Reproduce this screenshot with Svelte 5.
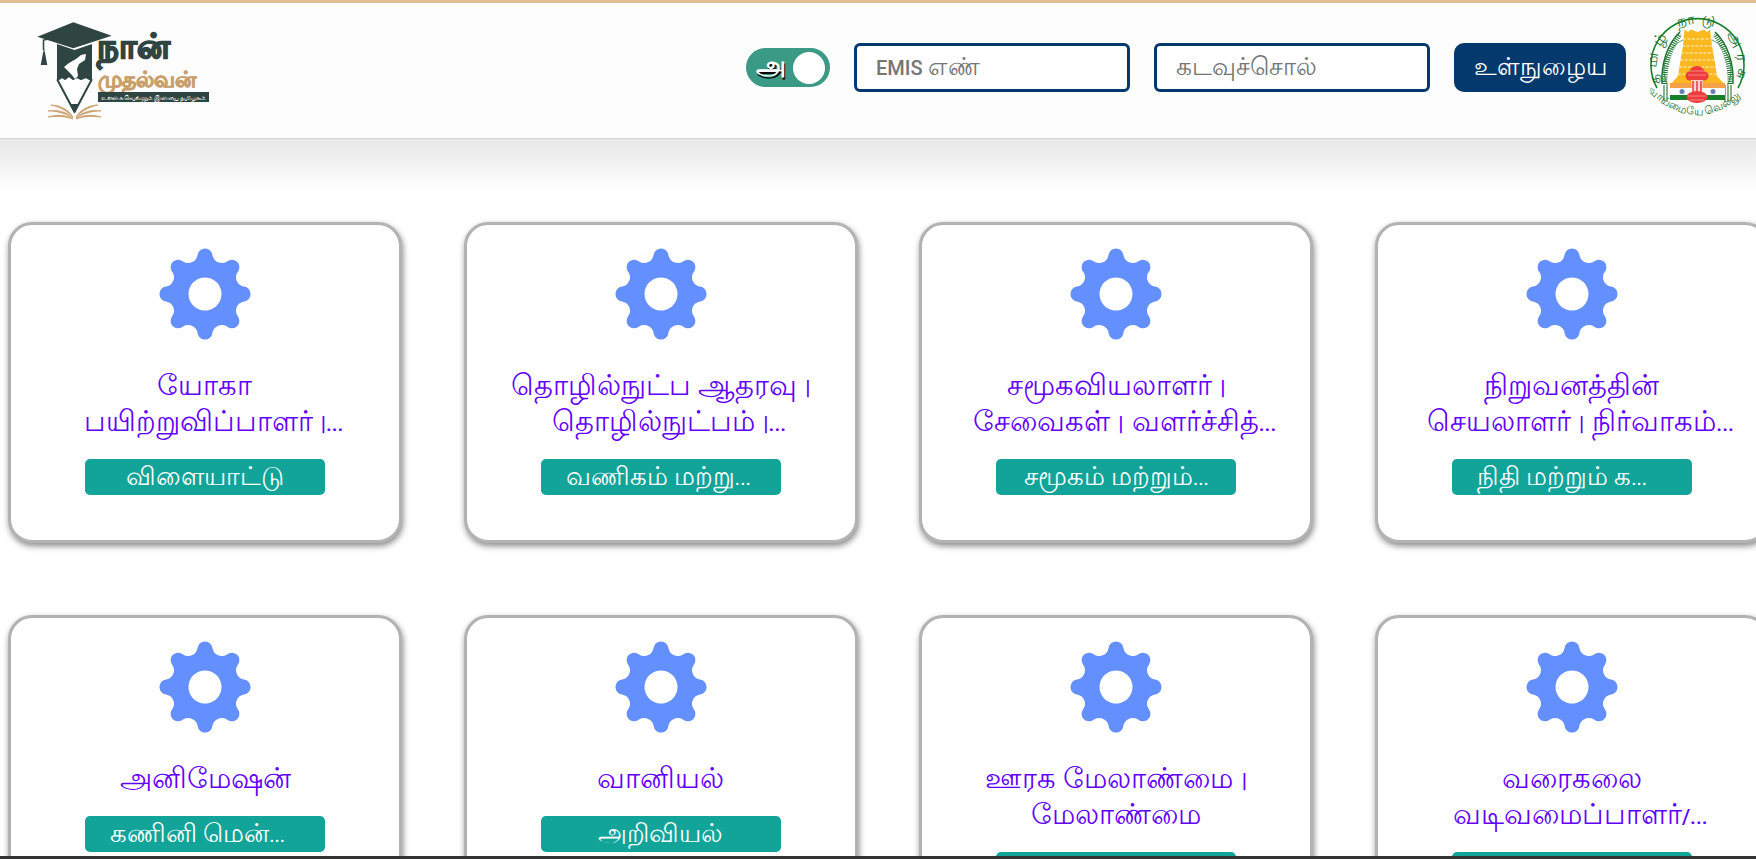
<script>
    const cards = [
        { title: ["யோகா", "பயிற்றுவிப்பாளர் |..."], tag: "விளையாட்டு" },
        { title: ["தொழில்நுட்ப ஆதரவு |", "தொழில்நுட்பம் |..."], tag: "வணிகம் மற்று...\u00a0" },
        { title: ["சமூகவியலாளர் |", "சேவைகள் | வளர்ச்சித்..."], tag: "சமூகம் மற்றும்..." },
        { title: ["நிறுவனத்தின்", "செயலாளர் | நிர்வாகம்..."], tag: "நிதி மற்றும் க...\u00a0\u00a0\u00a0\u00a0" },
        { title: ["அனிமேஷன்"], tag: "கணினி மென்...\u00a0\u00a0\u00a0" },
        { title: ["வானியல்"], tag: "அறிவியல்" },
        { title: ["ஊரக மேலாண்மை |", "மேலாண்மை"], tag: "" },
        { title: ["வரைகலை", "வடிவமைப்பாளர்/..."], tag: "" }
    ];

    let emis = "";
    let password = "";

    // tamil runs are set larger than the latin ones next to them
    function runs(text) {
        return text
            .split(/([\u0B80-\u0BFF]+(?: [\u0B80-\u0BFF]+)*)/)
            .filter(Boolean)
            .map((t) => ({ t, ta: /[\u0B80-\u0BFF]/.test(t) }));
    }

    // gear outline: convex lobe arcs joined by concave valley arcs, centre 50,50
    function gearPath() {
        const lobeAt = 38, lobeR = 7.5, valley = 34.3;
        const k = valley - lobeR;
        const R = (k * k - lobeAt * lobeAt) / (2 * k - 2 * lobeAt * Math.cos(Math.PI / 8));
        const valleyR = R - valley;
        const t = lobeR / (lobeR + valleyR);
        const pt = (r, a) => [50 + r * Math.sin(a), 50 - r * Math.cos(a)];
        const mix = (p, q) => [p[0] + (q[0] - p[0]) * t, p[1] + (q[1] - p[1]) * t];
        const fmt = (p) => p[0].toFixed(2) + " " + p[1].toFixed(2);

        let d = "";
        for (let i = 0; i < 8; i++) {
            const a = (i * Math.PI) / 4;
            const v = pt(R, a + Math.PI / 8);
            const before = mix(pt(lobeAt, a), pt(R, a - Math.PI / 8));
            const after = mix(pt(lobeAt, a), v);
            const next = mix(pt(lobeAt, a + Math.PI / 4), v);
            if (i === 0) d += "M" + fmt(before);
            d += `A${lobeR} ${lobeR} 0 0 1 ${fmt(after)}`;
            d += `A${valleyR.toFixed(2)} ${valleyR.toFixed(2)} 0 0 0 ${fmt(next)}`;
        }
        return d + "Z";
    }
    const gear = gearPath() + "M50 33.500a16.500 16.500 0 1 0 0.010 0Z";
</script>

<div class="page">
    <header class="topbar">
        <svg class="logo" viewBox="0 0 180 104" aria-label="logo">
            <path d="M1.300 16.700 37.300 2.300 75.700 15.700 37.300 28.300Z" fill="#2f4542" />
            <path d="M28 16 7.500 20V30" fill="none" stroke="#2f4542" stroke-width="1.500" />
            <path d="M8 28 4.700 45H11.300Z" fill="#2f4542" />
            <path d="M21 24 38.500 30 56 24V60H21Z" fill="#2f4542" />
            <path d="M21.500 60 26 57 29 59 33 56 37 59 41 57 45 59 50 57 55.500 60 38.500 92Z" fill="#fff" stroke="#2f4542" stroke-width="2" stroke-linejoin="round" />
            <path d="M34 84 38.500 93 43 84Z" fill="#2f4542" />
            <path d="M50 34 45 35 40 39 33 43 28 47 31 50 35 54 39 59 42 56 41 49 43 44 49 40Z" fill="#fff" />
            <path d="M37 97C31 91 24 87 15 85 24 85 33 90 37 97ZM37 98C29 93 21 91 12 91 21 89 31 92 37 98ZM37 99C29 96 21 96 12 97 21 94 31 95 37 99Z" fill="#c9a06d" stroke="#c9a06d" stroke-width="0.800" />
            <path d="M40 97C46 91 53 87 62 85 53 85 44 90 40 97ZM40 98C48 93 56 91 65 91 56 89 46 92 40 98ZM40 99C48 96 56 96 65 97 56 94 46 95 40 99Z" fill="#c9a06d" stroke="#c9a06d" stroke-width="0.800" />
            <text x="61" y="38" class="logo-top">நான்</text>
            <text x="62" y="67" class="logo-mid">முதல்வன்</text>
            <rect x="62" y="72" width="111" height="10" fill="#2f4542" />
            <text x="65" y="79.500" class="logo-sub" textLength="105" lengthAdjust="spacing">உலகை வெல்லும் இளைய தமிழகம்</text>
        </svg>

        <div class="login">
            <div class="toggle">
                <span class="toggle-letter">அ</span>
                <span class="knob"></span>
            </div>
            <label class="field">
                {#if !emis}
                    <span class="hint">{#each runs("EMIS எண்") as r}<span class:ta={r.ta}>{r.t}</span>{/each}</span>
                {/if}
                <input bind:value={emis} />
            </label>
            <label class="field">
                {#if !password}
                    <span class="hint">{#each runs("கடவுச்சொல்") as r}<span class:ta={r.ta}>{r.t}</span>{/each}</span>
                {/if}
                <input type="password" bind:value={password} />
            </label>
            <button class="submit">உள்நுழைய</button>
            <svg class="emblem" viewBox="0 0 96 106" aria-label="emblem">
                <defs>
                    <path id="ring" d="M9.500 62A40.500 40.500 0 1 1 85.500 62" />
                    <path id="motto" d="M3 80Q47.500 118 92 80" />
                </defs>
                <path d="M7 72A46.500 46.500 0 1 1 88 72" fill="none" stroke="#17802a" stroke-width="1.600" />
                <path d="M18 70A33.500 33.500 0 1 1 77 70" fill="none" stroke="#17802a" stroke-width="0.700" />
                <text class="ring-text"><textPath href="#ring" startOffset="50%" text-anchor="middle">தமிழ் நாடு அரசு</textPath></text>
                <path d="M12 68C11 48 17 28 30 16" fill="none" stroke="#17702a" stroke-width="1.400" />
                <path d="M15 68C14 50 20 32 30 18" fill="none" stroke="#17702a" stroke-width="5" stroke-dasharray="1 1.200" />
                <path d="M83 68C84 48 78 28 65 16" fill="none" stroke="#17702a" stroke-width="1.400" />
                <path d="M80 68C81 50 75 32 65 18" fill="none" stroke="#17702a" stroke-width="5" stroke-dasharray="1 1.200" />
                <path d="M12 69H20V87H16ZM75 69H83L79 87H75Z" fill="#fff" />
                <path d="M14 69V85M17 69V86M75 69V86M78 69V86M81 69V85" stroke="#4c8a52" stroke-width="1.300" />
                <path d="M34.500 13.500 38 16 41 13.500 47.500 16 54 13.500 57 16 60 13.500 62 30 65 47 67 60 75 69H20L28 60 30 47 33 30Z" fill="#fcb820" />
                <path d="M33 23H62M32 30H63M31 37H64M30 44H65M29 51H66M28 58H67" stroke="#fff2c4" stroke-width="1.100" stroke-dasharray="3 1.500" />
                <rect x="20" y="67" width="55" height="5" fill="#f6a04a" />
                <rect x="20" y="72" width="55" height="7" fill="#fff" />
                <rect x="20" y="79" width="55" height="5" fill="#17802a" />
                <circle cx="32" cy="75.500" r="2.500" fill="#6b7fb5" />
                <circle cx="63" cy="75.500" r="2.500" fill="#6b7fb5" />
                <circle cx="47" cy="58" r="8" fill="#ee3b3b" />
                <circle cx="40" cy="60" r="4.500" fill="#ee3b3b" />
                <circle cx="54" cy="60" r="4.500" fill="#ee3b3b" />
                <path d="M41 64H53L52 76H42Z" fill="#fbd3d3" />
                <path d="M43 65V76M47 65V76M51 65V76" stroke="#ee3b3b" stroke-width="1.500" />
                <ellipse cx="47" cy="81" rx="10.500" ry="6" fill="#ee3b3b" />
                <path d="M39 55H55M38 59H56M38 80H56M40 84H54" stroke="#f79a9a" stroke-width="0.800" />
                <text class="motto-text"><textPath href="#motto" startOffset="50%" text-anchor="middle">வாய்மையே வெல்லும்</textPath></text>
            </svg>
        </div>
    </header>
    <div class="shade"></div>

    <main class="grid">
        {#each cards as card}
            <div class="card">
                <svg class="gear" viewBox="0 0 100 100">
                    <path d={gear} fill="#648fff" fill-rule="evenodd" />
                </svg>
                <div class="title">
                    {#each card.title as line}
                        <div class="line" class:clamped={line.endsWith("...")}>{#each runs(line) as r}<span class:ta={r.ta}>{r.t}</span>{/each}</div>
                    {/each}
                </div>
                <div class="tag">{#each runs(card.tag) as r}<span class:ta={r.ta}>{r.t}</span>{/each}</div>
            </div>
        {/each}
    </main>
    <div class="bottom-line"></div>
</div>

<style>
    :global(body) {
        margin: 0;
        background: #fff;
    }

    .page {
        position: relative;
        width: 1756px;
        height: 859px;
        overflow: hidden;
        font-family: Roboto, "Noto Sans", sans-serif;
    }

    .topbar {
        height: 129px;
        padding: 0 10px 6px 36px;
        border-top: 3px solid #e2bd93;
        border-bottom: 1px solid #d6d6d6;
        background: #fdfdfd;
        display: flex;
        align-items: center;
        justify-content: space-between;
    }

    .logo {
        width: 180px;
        height: 104px;
        margin-top: 9px;
    }

    .logo-top {
        font-size: 34px;
        font-weight: 700;
        fill: #2f4542;
        stroke: #2f4542;
        stroke-width: 1.6px;
    }

    .logo-mid {
        font-size: 22px;
        font-weight: 700;
        fill: #c9a06d;
        stroke: #c9a06d;
        stroke-width: 0.8px;
    }

    .logo-sub {
        font-size: 6.5px;
        fill: #fff;
    }

    .login {
        display: flex;
        align-items: center;
        gap: 24px;
    }

    .toggle {
        width: 84px;
        height: 39px;
        border-radius: 20px;
        background: #3a9a85;
        display: flex;
        align-items: center;
        justify-content: space-between;
        padding: 0 5px 0 10px;
        box-sizing: border-box;
    }

    .toggle-letter {
        color: #fff;
        font-size: 27px;
        font-weight: 700;
        text-shadow: 1px 2px 0 #000;
    }

    .knob {
        width: 32px;
        height: 32px;
        border-radius: 50%;
        background: #fff;
    }

    .field {
        position: relative;
        display: flex;
        align-items: center;
        width: 276px;
        height: 49px;
        box-sizing: border-box;
        border: 3px solid #03396c;
        border-radius: 6px;
        padding: 0 19px;
        font-size: 20px;
        background: #fff;
    }

    .field input {
        position: absolute;
        inset: 0;
        border: 0;
        outline: 0;
        background: transparent;
        padding: 0 19px;
        font: inherit;
    }

    .hint {
        color: #757575;
        font-weight: 500;
    }

    .hint .ta {
        font-size: 24.500px;
        font-weight: 400;
    }

    .submit {
        width: 172px;
        height: 49px;
        border: 0;
        border-radius: 10px;
        background: #03396c;
        color: #fff;
        font-family: inherit;
        font-size: 24.500px;
    }

    .emblem {
        width: 96px;
        height: 106px;
        margin-top: 2px;
    }

    .ring-text {
        font-size: 15px;
        fill: #17702a;
        letter-spacing: 5.500px;
    }

    .motto-text {
        font-size: 11px;
        fill: #17702a;
    }

    .shade {
        height: 52px;
        margin-bottom: 31px;
        background: linear-gradient(#e7e7e7, #fff);
    }

    .grid {
        display: grid;
        grid-template-columns: repeat(4, 394px);
        grid-auto-rows: 321px;
        column-gap: 61.600px;
        row-gap: 72px;
        padding-left: 8px;
    }

    .card {
        box-sizing: border-box;
        border: 3px solid #b3b3b3;
        border-radius: 24px;
        box-shadow: 1px 3px 6px #888;
        background: #fff;
        padding-top: 19px;
        display: flex;
        flex-direction: column;
        align-items: center;
    }

    .gear {
        width: 100px;
        height: 100px;
        flex: none;
    }

    .title {
        margin-top: 24px;
        color: #6200ff;
        font-size: 21px;
        font-weight: 500;
        word-spacing: 3px;
        text-align: center;
    }

    .line {
        height: 36px;
        line-height: 36px;
        white-space: nowrap;
    }

    .clamped {
        padding-left: 17px;
    }

    .line .ta {
        font-size: 28.500px;
        font-weight: 400;
        word-spacing: 0;
    }

    .tag {
        margin-top: 19px;
        width: 240px;
        height: 36px;
        line-height: 34px;
        flex: none;
        border-radius: 5px;
        background: #12a499;
        color: #fff;
        font-size: 20px;
        text-align: center;
    }

    .tag .ta {
        font-size: 25.500px;
    }

    .bottom-line {
        position: absolute;
        left: 0;
        right: 0;
        bottom: 0;
        height: 3px;
        background: #333;
    }
</style>
